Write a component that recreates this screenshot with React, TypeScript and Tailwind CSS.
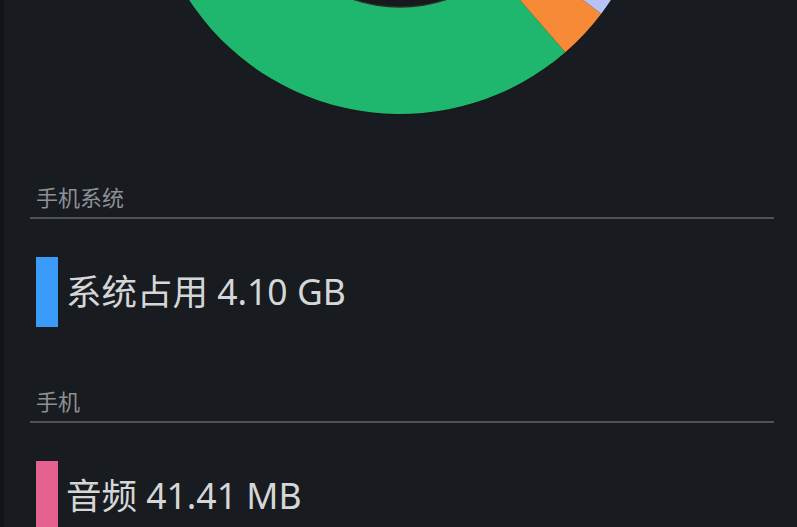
import React from 'react';

const CX = 400;
const CY = -138;
const R_OUT = 252;
const R_IN = 145;

function point(r: number, deg: number) {
  const a = (deg * Math.PI) / 180;
  return [CX + r * Math.sin(a), CY + r * Math.cos(a)];
}

function arcPath(from: number, to: number) {
  const [x1, y1] = point(R_OUT, from);
  const [x2, y2] = point(R_OUT, to);
  const [x3, y3] = point(R_IN, to);
  const [x4, y4] = point(R_IN, from);
  const large = to - from > 180 ? 1 : 0;
  return `M${x1} ${y1} A${R_OUT} ${R_OUT} 0 ${large} 0 ${x2} ${y2} L${x3} ${y3} A${R_IN} ${R_IN} 0 ${large} 1 ${x4} ${y4} Z`;
}

const segments = [
  { from: -150, to: 41, color: '#1fb76d' },
  { from: 41, to: 53, color: '#f68a36' },
  { from: 53, to: 90, color: '#b7c3f6' },
];

const groups = [
  { title: '手机系统', items: [{ label: '系统占用 4.10 GB', color: '#3a9cf8' }] },
  { title: '手机', items: [{ label: '音频 41.41 MB', color: '#e5618f' }] },
];

export default function App() {
  return (
    <div
      className="relative h-[527px] w-[797px] overflow-hidden bg-[#181b1f]"
      style={{ fontFamily: '"Noto Sans", "Noto Sans CJK SC", sans-serif' }}
    >
      <div className="absolute inset-y-0 left-0 w-[4px] bg-[#111316]" />
      <svg width="797" height="130" className="block">
        <circle cx={CX} cy={CY} r={R_OUT + 1} fill="#0f1a14" opacity="0.6" />
        {segments.map((s) => (
          <path key={s.color} d={arcPath(s.from, s.to)} fill={s.color} />
        ))}
        <circle cx={CX} cy={CY} r={R_IN} fill="#17191c" stroke="#2b2f2c" strokeWidth="1.5" />
      </svg>

      <div className="pl-[30px] pr-[23px]">
        {groups.map((g, i) => (
          <section key={g.title} className={i === 0 ? 'mt-[56px]' : 'mt-[63px]'}>
            <div className="pl-[6px] text-[22px] leading-[22px] text-[#8d9094]">{g.title}</div>
            <div className="mt-[9px] h-[2px] bg-[#505356]" />
            {g.items.map((item) => (
              <div key={item.label} className="mt-[38px] flex items-center gap-[8px] pl-[6px]">
                <div className="h-[70px] w-[22px] shrink-0" style={{ backgroundColor: item.color }} />
                <span className="text-[35.5px] leading-none text-[#d5d6d7]">{item.label}</span>
              </div>
            ))}
          </section>
        ))}
      </div>
    </div>
  );
}
